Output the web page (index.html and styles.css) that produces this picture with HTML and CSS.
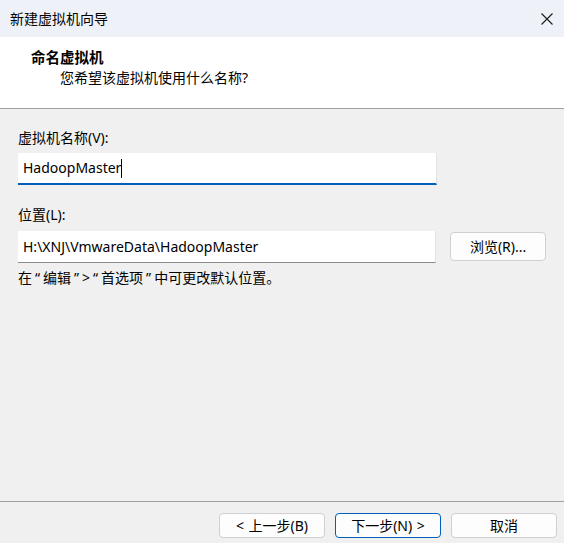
FILE: index.html
```html
<!DOCTYPE html>
<html lang="zh-CN">
<head>
<meta charset="utf-8">
<title>新建虚拟机向导</title>
<link rel="stylesheet" href="styles.css">
</head>
<body>
<div class="window">
  <div class="titlebar">
    <span class="title">新建虚拟机向导</span>
    <svg class="close" width="12" height="12" viewBox="0 0 12 12"><path d="M0.5 0.5 L11.5 11.5 M11.5 0.5 L0.5 11.5" stroke="#1a1a1a" stroke-width="1.1" fill="none"/></svg>
  </div>
  <div class="header">
    <div class="h-title">命名虚拟机</div>
    <div class="h-sub">您希望该虚拟机使用什么名称?</div>
  </div>
  <div class="content">
    <div class="label">虚拟机名称(V):</div>
    <div class="input active"><span>HadoopMaster</span><span class="caret"></span></div>
    <div class="label label2">位置(L):</div>
    <div class="row">
      <div class="input">H:\XNJ\VmwareData\HadoopMaster</div>
      <div class="btn browse">浏览(R)...</div>
    </div>
    <div class="hint">在<span class="q">“</span>编辑<span class="q">”</span>&gt;<span class="q">“</span>首选项<span class="q">”</span>中可更改默认位置。</div>
  </div>
  <div class="footer">
    <div class="btn">&lt; 上一步(B)</div>
    <div class="btn default">下一步(N) &gt;</div>
    <div class="btn">取消</div>
  </div>
</div>
</body>
</html>
```

FILE: styles.css
```css
html, body {
  margin: 0;
  padding: 0;
}
body {
  width: 564px;
  height: 543px;
  overflow: hidden;
  font-family: "Noto Sans", "Noto Sans CJK SC", sans-serif;
  font-size: 14px;
  color: #000;
  background: #f0f0f0;
}
.window {
  display: flex;
  flex-direction: column;
  height: 543px;
}
.titlebar {
  height: 37px;
  flex: none;
  background: #eef2f8;
  display: flex;
  align-items: center;
  justify-content: space-between;
  padding: 0 11px 0 10px;
  box-sizing: border-box;
}
.title {
  font-size: 14px;
  line-height: 20px;
}
.close {
  display: block;
}
.header {
  height: 72px;
  flex: none;
  background: #fff;
  border-bottom: 1px solid #a0a0a0;
  box-sizing: border-box;
  padding-top: 10px;
}
.h-title {
  font-weight: bold;
  padding-left: 31px;
  line-height: 20px;
  font-size: 14.5px;
}
.h-sub {
  padding-left: 60px;
  line-height: 20px;
  margin-top: 1px;
}
.content {
  flex: 1;
  padding: 19px 18px 0 18px;
}
.label {
  line-height: 20px;
  margin-bottom: 5px;
}
.label2 {
  margin-top: 20px;
  margin-bottom: 6px;
}
.input {
  width: 419px;
  height: 32px;
  box-sizing: border-box;
  background: #fff;
  border-right: 1px solid #e3e3e3;
  border-bottom: 1px solid #8a8a8a;
  display: flex;
  align-items: center;
  padding-left: 5px;
  line-height: 20px;
}
.input.active {
  border-bottom: 2px solid #005fb8;
}
.caret {
  display: inline-block;
  width: 1px;
  height: 19px;
  background: #000;
}
.row {
  display: flex;
  align-items: flex-start;
  gap: 14px;
}
.btn {
  width: 106px;
  height: 25px;
  box-sizing: border-box;
  border: 1px solid #d0d0d0;
  border-radius: 4px;
  background: #fdfdfd;
  display: flex;
  align-items: center;
  justify-content: center;
  line-height: 20px;
  word-spacing: 1px;
}
.browse {
  width: 96px;
  height: 29px;
  margin-top: 1px;
}
.hint {
  margin-top: 5px;
  line-height: 20px;
}
.q {
  padding: 0 3px;
}
.footer {
  flex: none;
  height: 42px;
  box-sizing: border-box;
  border-top: 1px solid #a0a0a0;
  display: flex;
  justify-content: flex-end;
  gap: 10px;
  padding: 11px 7px 0 0;
}
.btn.default {
  border-color: #005fb8;
}
```
